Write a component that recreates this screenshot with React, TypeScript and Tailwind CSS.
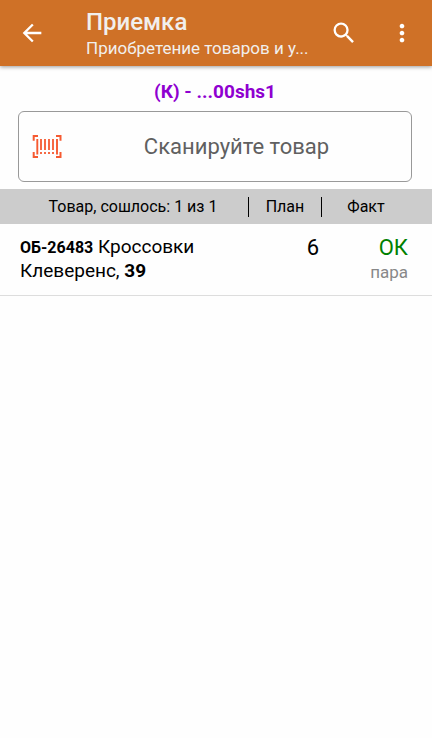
import React from 'react'

const items = [
  { code: 'ОБ-26483', name: 'Кроссовки Клеверенс,', size: '39', plan: 6, fact: 'ОК', unit: 'пара' },
]

function BarcodeIcon() {
  return (
    <svg width="30" height="24" viewBox="0 0 30 24" fill="none" stroke="#f65a31" aria-hidden="true">
      <path strokeWidth="2" d="M6 1H1.7v4.8M24 1h4.5v4.8M1.7 17v5H6M28.5 17v5H24" />
      <path strokeWidth="1.9" d="M5.3 4v15.5M25 4v15.5" />
      <path strokeWidth="1.8" d="M9 4v11M13 4v11M17 4v11M21 4v11" />
      <path strokeWidth="1.8" d="M9 17v2M13 17v2M17 17v2M21 17v2" />
    </svg>
  )
}

function Header() {
  return (
    <header className="flex h-[66px] items-center bg-[#cf7127] pl-5 pr-4 text-white shadow-[0_1px_4px_rgba(0,0,0,0.4)]">
      <button type="button" aria-label="Назад" className="shrink-0">
        <svg width="28" height="28" viewBox="0 0 24 24" fill="currentColor" className="-ml-0.5">
          <path d="M20 11H7.83l5.59-5.59L12 4l-8 8 8 8 1.41-1.41L7.83 13H20v-2z" />
        </svg>
      </button>
      <div className="ml-10 min-w-0 flex-1 pt-0.5 text-[#f1efed]">
        <h1 className="text-2xl leading-7 font-medium">Приемка</h1>
        <p className="truncate text-[17px] leading-6">Приобретение товаров и у...</p>
      </div>
      <button type="button" aria-label="Поиск" className="ml-5 shrink-0">
        <svg width="28" height="28" viewBox="0 0 24 24" fill="currentColor">
          <path d="M15.5 14h-.79l-.28-.27A6.471 6.471 0 0 0 16 9.5 6.5 6.5 0 1 0 9.5 16c1.61 0 3.09-.59 4.23-1.57l.27.28v.79l5 4.99L20.49 19l-4.99-5zm-6 0C7.01 14 5 11.99 5 9.5S7.01 5 9.5 5 14 7.01 14 9.5 11.99 14 9.5 14z" />
        </svg>
      </button>
      <button type="button" aria-label="Меню" className="ml-[30px] shrink-0">
        <svg width="28" height="28" viewBox="0 0 24 24" fill="currentColor">
          <path d="M12 8c1.1 0 2-.9 2-2s-.9-2-2-2-2 .9-2 2 .9 2 2 2zm0 2c-1.1 0-2 .9-2 2s.9 2 2 2 2-.9 2-2-.9-2-2-2zm0 6c-1.1 0-2 .9-2 2s.9 2 2 2 2-.9 2-2-.9-2-2-2z" />
        </svg>
      </button>
    </header>
  )
}

function App() {
  return (
    <div className="min-h-screen bg-[#fefefe] font-['Roboto',sans-serif] text-black">
      <Header />
      <main>
        <p className="pt-3 pr-0.5 text-center text-[19px] leading-7 font-bold text-[#8f00d0]">(К) - ...00shs1</p>
        <label className="mr-5 ml-[18px] mt-[5px] mb-[7px] flex h-[71px] items-center rounded-md border border-[#999] pl-[13px]">
          <BarcodeIcon />
          <input
            type="text"
            aria-label="Сканируйте товар"
            placeholder="Сканируйте товар"
            className="min-w-0 flex-1 text-center text-[22px] outline-none placeholder:text-[#606060]"
          />
        </label>
        <table className="w-full table-fixed">
          <colgroup>
            <col />
            <col className="w-[73px]" />
            <col className="w-[110px]" />
          </colgroup>
          <thead className="bg-[#ccc] text-base leading-5">
            <tr className="h-[35px]">
              <th className="p-0 pl-[18px] font-normal">
                <div className="border-r border-black">Товар, сошлось: 1 из 1</div>
              </th>
              <th className="p-0 font-normal">
                <div className="border-r border-black">План</div>
              </th>
              <th className="p-0 pr-[22px] font-normal">Факт</th>
            </tr>
          </thead>
          <tbody>
            {items.map((item) => (
              <tr key={item.code} className="border-b border-[#ddd] align-top">
                <td className="pt-[11px] pr-10 pb-3 pl-5 text-[19px] leading-6">
                  <b className="text-base leading-4">{item.code}</b> {item.name}{' '}
                  <b className="text-[19px] leading-5">{item.size}</b>
                </td>
                <td className="pt-3 pr-[3px] text-right text-[22px] leading-6">{item.plan}</td>
                <td className="pt-3 pr-6 text-right">
                  <div className="text-[22px] leading-6 text-[#008000]">{item.fact}</div>
                  <div className="text-[17px] leading-6 text-[#888]">{item.unit}</div>
                </td>
              </tr>
            ))}
          </tbody>
        </table>
      </main>
    </div>
  )
}

export default App
